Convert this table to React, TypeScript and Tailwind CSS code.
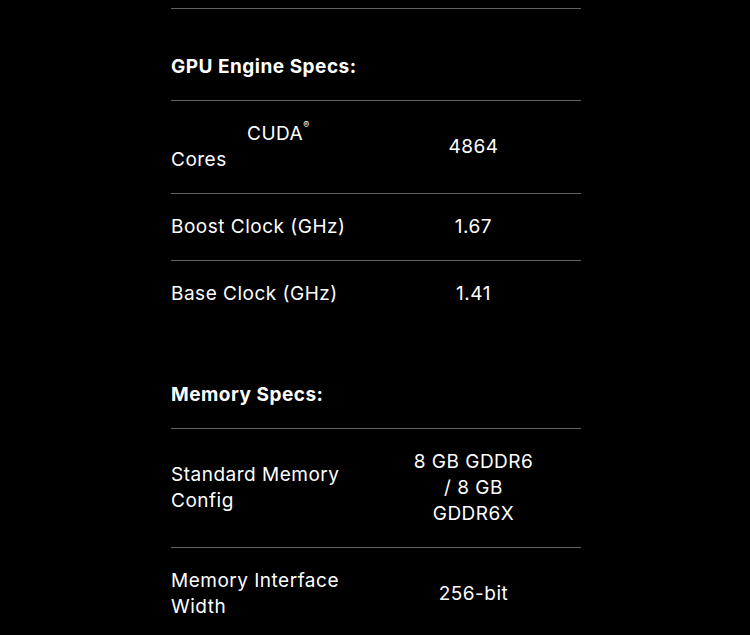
import React from "react";

type Spec = { label: React.ReactNode; value: React.ReactNode };

const gpuSpecs: Spec[] = [
  {
    label: (
      <>
        <span className="block pl-[76px]">
          CUDA<sup className="text-[9px] align-[8px]">®</sup>
        </span>
        <span className="block">Cores</span>
      </>
    ),
    value: "4864",
  },
  { label: "Boost Clock (GHz)", value: "1.67" },
  { label: "Base Clock (GHz)", value: "1.41" },
];

const memorySpecs: Spec[] = [
  { label: "Standard Memory Config", value: "8 GB GDDR6 / 8 GB GDDR6X" },
  { label: "Memory Interface Width", value: "256-bit" },
];

function SpecRow({ spec }: { spec: Spec }) {
  return (
    <div className="grid grid-cols-[195px_215px] items-center border-t border-[#5f5f5f] py-[20px]">
      <div className="pr-2">{spec.label}</div>
      <div className="mx-auto max-w-[128px] text-center">{spec.value}</div>
    </div>
  );
}

function SpecSection({ title, specs, top }: { title: string; specs: Spec[]; top: string }) {
  return (
    <section>
      <h3 className={`${top} pb-[20px] font-bold`}>{title}</h3>
      {specs.map((s, i) => (
        <SpecRow key={i} spec={s} />
      ))}
    </section>
  );
}

export default function App() {
  return (
    <div
      className="min-h-screen bg-black text-white text-[19px] leading-[26px] tracking-[0.5px] antialiased"
      style={{ fontFamily: "Inter, 'Noto Sans', Arial, sans-serif" }}
    >
      <div className="mx-auto w-[410px] translate-x-[1px]">
        <div className="h-[9px] border-b border-[#5f5f5f]" />
        <SpecSection title="GPU Engine Specs:" specs={gpuSpecs} top="pt-[45px]" />
        <SpecSection title="Memory Specs:" specs={memorySpecs} top="pt-[55px]" />
      </div>
    </div>
  );
}
